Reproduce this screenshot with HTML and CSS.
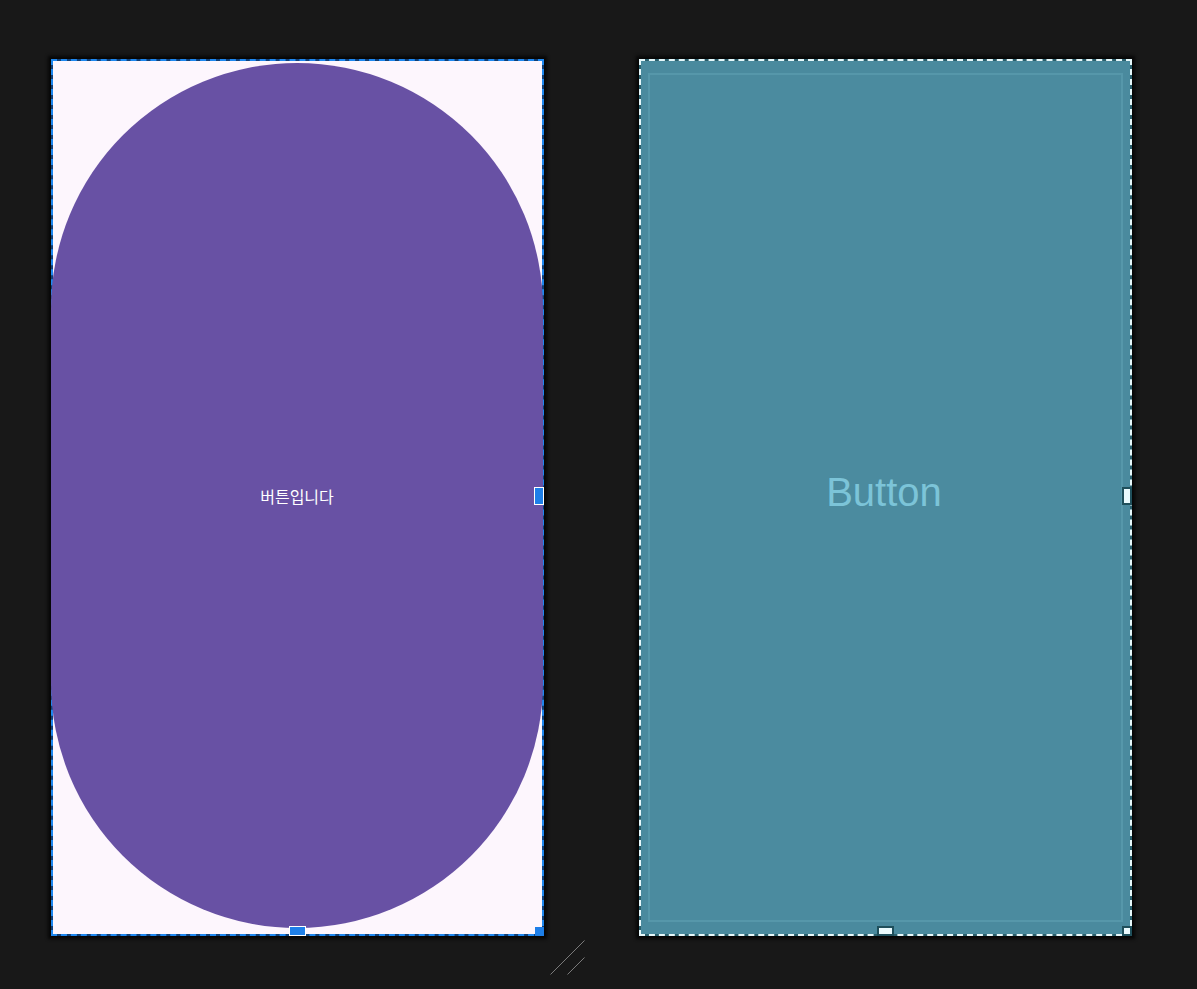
FILE: index.html
```html
<!DOCTYPE html>
<html lang="ko">
<head>
<meta charset="utf-8">
<title>Preview</title>
<link rel="stylesheet" href="styles.css">
</head>
<body>
<div class="canvas">
  <div class="panel panel-left">
    <div class="surface">
      <div class="pill"><span class="pill-label">버튼입니다</span></div>
    </div>
    <span class="handle handle-right blue"></span>
    <span class="handle handle-bottom blue"></span>
    <span class="handle handle-corner blue"></span>
    <svg class="grip" width="36" height="36" viewBox="0 0 36 36">
      <line x1="0.5" y1="34.5" x2="34.5" y2="0.5" />
      <line x1="17.5" y1="34.5" x2="34.5" y2="17.5" />
    </svg>
  </div>
  <div class="panel panel-right">
    <div class="teal">
      <div class="teal-inner"><span class="teal-label">Button</span></div>
    </div>
    <span class="handle handle-right light"></span>
    <span class="handle handle-bottom light"></span>
    <span class="handle handle-corner light"></span>
  </div>
</div>
</body>
</html>
```
FILE: styles.css
```css
html, body {
  margin: 0;
  padding: 0;
  background: #181818;
  width: 1197px;
  height: 989px;
  overflow: hidden;
}
.canvas {
  display: flex;
  gap: 95px;
  padding: 59px 0 0 51px;
  font-family: "Noto Sans CJK KR", Roboto, "Liberation Sans", sans-serif;
}
.panel {
  position: relative;
  box-sizing: border-box;
  height: 877px;
  display: flex;
  box-shadow: 0 0 3px 3px #070707;
}
.panel-left {
  width: 493px;
  border: 2px dashed #1e88f0;
  background: #0f3f78;
}
.surface {
  flex: 1;
  background: #fdf6fd;
  display: flex;
  align-items: flex-start;
}
.pill {
  margin: 2px -1px 0 -2px;
  flex: 1;
  height: 865px;
  border-radius: 250px / 250px;
  background: #6851a4;
  display: flex;
  align-items: center;
  justify-content: center;
  position: relative;
}
.pill-label {
  color: #ffffff;
  font-size: 16px;
  line-height: 20px;
}
.panel-right {
  width: 493px;
  border: 2px dashed #e6f8fb;
  background: #2a5f6c;
}
.teal {
  flex: 1;
  background: #4a8a9e;
  display: flex;
  padding: 12px 7px 12px 7px;
}
.teal-inner {
  flex: 1;
  border: 2px solid #5697aa;
  background: #4b8b9f;
  display: flex;
  align-items: center;
  justify-content: center;
}
.teal-label {
  font-family: "Liberation Sans", Arial, sans-serif;
  font-size: 40px;
  color: #7cc4d8;
  margin-bottom: 10px;
  margin-right: 3px;
}
.handle {
  position: absolute;
  box-sizing: border-box;
  z-index: 2;
}
.handle.blue {
  background: #1e7fe8;
  border: 1px solid #ffffff;
}
.handle.light {
  background: #eafafd;
  border: 2px solid #1f4f5b;
}
.handle-right {
  width: 10px;
  height: 18px;
  right: -2px;
  top: 426px;
}
.handle-bottom {
  width: 17px;
  height: 10px;
  bottom: -2px;
  left: 236px;
}
.handle-corner {
  width: 10px;
  height: 10px;
  right: -2px;
  bottom: -2px;
}
.handle-corner.blue {
  width: 9px;
  height: 9px;
  border: none;
  background: #1e7fe8;
}
.grip {
  position: absolute;
  left: 497px;
  top: 879px;
}
.grip line {
  stroke: #7a7a7a;
  stroke-width: 1;
}
```
